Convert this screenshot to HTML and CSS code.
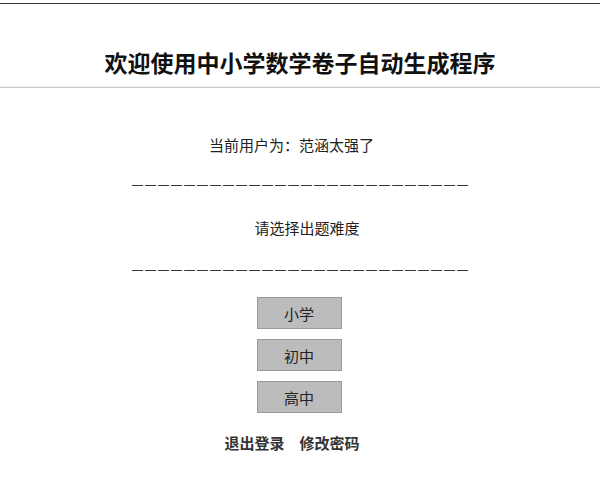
FILE: index.html
```html
<!DOCTYPE html>
<html lang="zh-CN">
<head>
<meta charset="utf-8">
<title>中小学数学卷子自动生成程序</title>
<link rel="stylesheet" href="styles.css">
</head>
<body>
<div class="page">
  <header class="header">
    <h1 class="title">欢迎使用中小学数学卷子自动生成程序</h1>
  </header>
  <main class="main">
    <p class="line user">当前用户为：范涵太强了</p>
    <p class="line dashes">——————————————————————————</p>
    <p class="line prompt">请选择出题难度</p>
    <p class="line dashes dashes2">——————————————————————————</p>
    <div class="levels">
      <button class="level">小学</button>
      <button class="level">初中</button>
      <button class="level">高中</button>
    </div>
    <div class="links">
      <a class="link">退出登录</a>
      <a class="link">修改密码</a>
    </div>
  </main>
</div>
</body>
</html>
```

FILE: styles.css
```css
html, body {
  margin: 0;
  padding: 0;
  background: #fff;
}
body {
  font-family: "Noto Sans CJK SC", "Noto Sans", sans-serif;
  color: #222;
}
.page {
  padding-top: 3px;
}
.header {
  border-top: 1px solid #333;
  border-bottom: 1px solid #c8c8c8;
  box-shadow: inset 0 -4px 3px -3px #eee;
  height: 85px;
  box-sizing: border-box;
  padding-top: 42px;
  text-align: center;
}
.title {
  margin: 0;
  font-size: 23px;
  line-height: 32px;
  font-weight: 700;
  color: #111;
}
.main {
  display: flex;
  flex-direction: column;
  align-items: center;
}
.line {
  margin: 0;
  font-size: 15px;
  line-height: 20px;
  height: 20px;
  text-align: center;
}
.user {
  margin-top: 47px;
  margin-right: 17px;
}
.dashes {
  margin-top: 19px;
  font-family: "Liberation Sans", Arial, sans-serif;
  font-size: 11px;
  letter-spacing: 2px;
  padding-left: 2px;
  color: #000;
}
.prompt {
  margin-top: 24px;
  margin-left: 14px;
}
.dashes2 {
  margin-top: 21px;
}
.levels {
  margin-top: 18px;
  margin-right: 2px;
  display: flex;
  flex-direction: column;
  gap: 10px;
}
.level {
  width: 85px;
  height: 32px;
  background: #bcbcbc;
  border: 1px solid #9a9a9a;
  font-family: inherit;
  font-size: 15px;
  color: #222;
  padding: 0;
}
.links {
  margin-top: 20px;
  margin-right: 16px;
  display: flex;
  gap: 15px;
  line-height: 20px;
}
.link {
  font-size: 15px;
  font-weight: 700;
  color: #333;
}
```
